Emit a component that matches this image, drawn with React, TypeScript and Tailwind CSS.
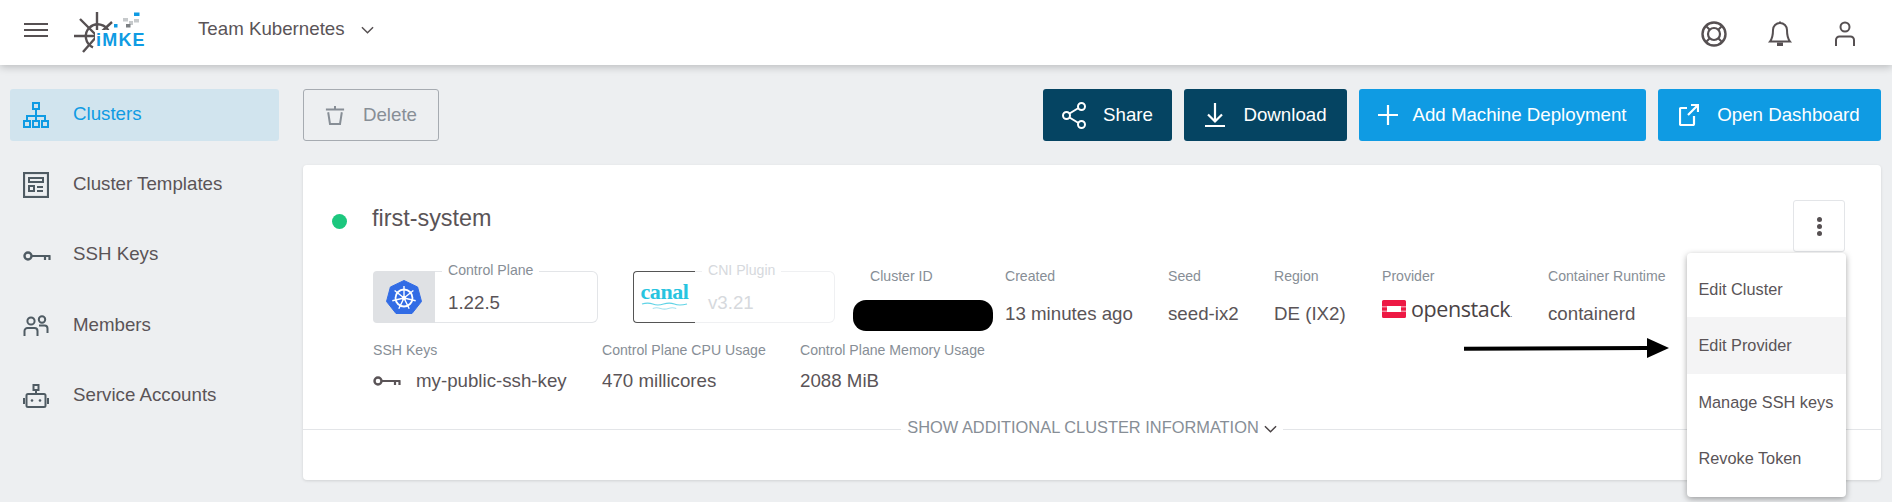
import React from "react";

const F = "font-['Liberation_Sans',Arial,sans-serif]";

function Sv({ className, children, vb = "0 0 24 24" }: { className: string; children: React.ReactNode; vb?: string }) {
  return (
    <svg viewBox={vb} className={className} fill="none" stroke="currentColor" strokeWidth="2">
      {children}
    </svg>
  );
}

const NetIcon = () => (
  <Sv vb="0 0 26 26" className="w-[26px] h-[26px]">
    <rect x="10" y="1" width="6" height="6" />
    <rect x="1" y="19" width="6" height="6" />
    <rect x="10" y="19" width="6" height="6" />
    <rect x="19" y="19" width="6" height="6" />
    <path d="M13 7v12M4 19v-5h18v5" />
  </Sv>
);
const TplIcon = () => (
  <Sv vb="0 0 26 26" className="w-[26px] h-[26px]">
    <rect x="1" y="1" width="24" height="24" strokeWidth="2.2" />
    <rect x="6" y="6" width="14" height="4" />
    <rect x="6" y="14" width="5" height="5" />
    <path d="M14 15h6M14 19h6" />
  </Sv>
);
const KeyIcon = ({ c = "w-[28px] h-[14px]" }: { c?: string }) => (
  <Sv vb="0 0 28 14" className={c}>
    <circle cx="5" cy="7" r="3.5" strokeWidth="2.4" />
    <path d="M8.5 7H27.5M22 7v4M26.5 7v4" strokeWidth="2.2" />
  </Sv>
);
const UsersIcon = () => (
  <Sv vb="0 0 26 26" className="w-[26px] h-[26px]">
    <circle cx="8" cy="8" r="3.6" />
    <circle cx="19" cy="6.5" r="3.2" />
    <path d="M1.5 23v-5a3 3 0 0 1 3-3h7a3 3 0 0 1 3 3v5M16 12.5h5.5a3 3 0 0 1 3 3V20" />
  </Sv>
);
const RobotIcon = () => (
  <Sv vb="0 0 26 26" className="w-[26px] h-[26px]">
    <rect x="10.5" y="1" width="5" height="5" />
    <path d="M13 6v4" />
    <rect x="3.5" y="10" width="19" height="13" rx="1.5" />
    <path d="M1 14v6M25 14v6" />
    <circle cx="9" cy="16.5" r="1.3" fill="currentColor" stroke="none" />
    <circle cx="17" cy="16.5" r="1.3" fill="currentColor" stroke="none" />
  </Sv>
);

function NavItem({ icon, label, active }: { icon: React.ReactNode; label: string; active?: boolean }) {
  return (
    <div
      className={`flex items-center h-[52px] rounded-[3px] pl-[13px] ${
        active ? "bg-[#d1e4ee] text-[#0f9be3]" : "text-[#5a5457]"
      }`}
    >
      <span className={`w-[50px] flex items-center ${active ? "text-[#0f9be3]" : "text-[#4f5b63]"}`}>{icon}</span>
      <span className="text-[18.72px] leading-none -mt-[2px]">{label}</span>
    </div>
  );
}

function ActionButton({ icon, label, dark, w, gap = "gap-[17px]" }: { icon: React.ReactNode; label: string; dark?: boolean; w: string; gap?: string }) {
  return (
    <div
      className={`flex items-center justify-center ${gap} h-[52px] rounded-[3px] text-white text-[18.72px] ${w} ${
        dark ? "bg-[#054462]" : "bg-[#0f9be3]"
      }`}
    >
      {icon}
      <span>{label}</span>
    </div>
  );
}

function Info({ label, children, w, labelClass = "", gap = "mt-[14px]" }: { label: string; children: React.ReactNode; w: string; labelClass?: string; gap?: string }) {
  return (
    <div className={`${w} shrink-0`}>
      <div className={`text-[14.1px] leading-[16px] text-[#878e96] ${labelClass}`}>{label}</div>
      <div className={`${gap} h-[32px] flex items-center text-[18.72px] text-[#5a5457]`}>{children}</div>
    </div>
  );
}

function VersionBox({ label, value, logo, w, faded, logoClass }: { label: string; value: string; logo: React.ReactNode; w: string; faded?: boolean; logoClass: string }) {
  return (
    <div className={`relative ${w} h-[52px] mt-[3px] shrink-0 flex`}>
      <div className={`w-[62px] h-full flex items-center justify-center rounded-l-[4px] ${logoClass}`}>{logo}</div>
      <div className={`flex-1 flex items-center pl-[13px] border border-l-0 rounded-r-[6px] border-[#e3e5e8] text-[18.72px] pt-[12px] ${faded ? "text-[#d6d9dd] border-[#eff0f2]" : "text-[#5a5457]"}`}>
        {value}
      </div>
      <span className={`absolute left-[69px] -top-[9px] px-[6px] bg-white text-[14.1px] leading-[16px] ${faded ? "text-[#d6d9dd]" : "text-[#878e96]"}`}>
        {label}
      </span>
    </div>
  );
}

const K8s = () => (
  <svg viewBox="0 0 36 35" className="w-[36px] h-[35px]">
    <path d="M18 0.5 L31.6 7 L35.5 21.5 L26 33.5 L10 33.5 L0.5 21.5 L4.4 7 Z" fill="#326ce5" stroke="#326ce5" strokeLinejoin="round" />
    <circle cx="18" cy="18" r="8.5" stroke="#fff" fill="none" strokeWidth="1.8" />
    <path d="M18 18L18 6M18 18L27.4 10.5M18 18L29.7 20.7M18 18L23.2 28.8M18 18L12.8 28.8M18 18L6.3 20.7M18 18L8.6 10.5" stroke="#fff" strokeWidth="1.4" />
    <circle cx="18" cy="18" r="2.2" fill="#fff" />
  </svg>
);

const Canal = () => (
  <div className="flex flex-col items-center -mt-[2px]">
    <span className="font-['Liberation_Serif',serif] text-[#27c4e0] text-[22px] leading-[20px] font-bold tracking-[-0.4px]">canal</span>
    <svg viewBox="0 0 48 9" className="w-[47px] h-[9px]" fill="none" stroke="#a6e3ef" strokeWidth="1.2">
      <path d="M1 2q6-2 11 0t11 0 11 0 13 0" stroke="#5fd3e6" />
      <path d="M12 6.5q4-1.5 8 0t8 0 8 0" />
    </svg>
  </div>
);

const OpenStack = () => (
  <div className="flex items-center gap-[5px] -mt-[10px]">
    <svg viewBox="0 0 24 18" className="w-[24px] h-[18px]">
      <path d="M0 1.5A1.5 1.5 0 0 1 1.5 0h21A1.5 1.5 0 0 1 24 1.5V6.5h-5V6H5v.5H0zM0 11.5h5v.5h14v-.5h5v5a1.5 1.5 0 0 1-1.5 1.5h-21A1.5 1.5 0 0 1 0 16.5zM0 7.3h5v3.4H0zM19 7.3h5v3.4h-5z" fill="#ed1944" />
    </svg>
    <span className="font-['Open_Sans',sans-serif] text-[21.5px] leading-none tracking-[-0.4px] text-[#4a4345] font-medium">
      openstack<span className="text-[8px] font-normal">.</span>
    </span>
  </div>
);

const Logo = () => (
  <div className="relative w-[72px] h-[42px] ml-[26px] -mt-[2px]">
    <svg viewBox="0 0 72 42" className="absolute inset-0 w-[72px] h-[42px]" fill="none">
      <g stroke="#565052" strokeWidth="2.4">
        <path d="M35 21A12 12 0 1 0 19 36.300" />
        <path d="M23 1v24M6 8l17 17M38 11L23 25M0 25h23M9 41l14-16" />
      </g>
      <rect x="40" y="13" width="3.5" height="3.5" fill="#0f9be3" />
      <rect x="49" y="7" width="5" height="3.5" fill="#c6c9cb" />
      <rect x="55" y="10" width="4" height="4" fill="#c6c9cb" />
      <rect x="52" y="13" width="4.500" height="3.500" fill="#7b7f82" />
      <rect x="60" y="8" width="5" height="3.5" fill="#c6c9cb" />
      <rect x="60" y="1.5" width="5.5" height="3.5" fill="#0f9be3" />
    </svg>
    <span className="absolute left-[21px] top-[19px] pl-[1px] bg-white text-[#0f9be3] text-[18px] leading-[20px] font-bold tracking-[1.2px]">iMKE</span>
  </div>
);

export default function App() {
  return (
    <div className={`${F} w-[1892px] h-[502px] overflow-hidden bg-[#edeff1] flex flex-col`}>
      <header className="h-[65px] shrink-0 bg-white shadow-[0_2px_8px_rgba(0,0,0,0.22)] z-10 flex items-center pl-[24px]">
        <svg viewBox="0 0 24 16" className="w-[24px] h-[16px] -mt-[6px] text-[#565052]" fill="none" stroke="currentColor" strokeWidth="2">
          <path d="M0 2h24M0 8h24M0 14h24" />
        </svg>
        <Logo />
        <span className="ml-[52px] text-[18.72px] text-[#5a5457] -mt-[7px]">Team Kubernetes</span>
        <svg viewBox="0 0 14 8" className="ml-[16px] w-[13px] h-[8px] -mt-[5px] text-[#565052]" fill="none" stroke="currentColor" strokeWidth="1.6">
          <path d="M1 1l6 6 6-6" />
        </svg>
        <div className="ml-auto flex items-center gap-[39.5px] pr-[34px] mt-[3px] text-[#565052]">
          <Sv vb="0 0 26 26" className="w-[26px] h-[26px]">
            <circle cx="13" cy="13" r="11.5" strokeWidth="2.4" />
            <circle cx="13" cy="13" r="6" strokeWidth="2.2" />
            <path d="M5 5l4 4M21 5l-4 4M5 21l4-4M21 21l-4-4" strokeWidth="2" />
          </Sv>
          <Sv vb="0 0 26 26" className="w-[26px] h-[26px]">
            <path d="M13 2a7 7 0 0 1 7 7c0 6 1 9 3 11.5H3C5 18 6 15 6 9a7 7 0 0 1 7-7z" />
            <path d="M13 0.500v2M11 22.500h4v1.500h-4z" fill="currentColor" />
          </Sv>
          <Sv vb="0 0 26 26" className="w-[26px] h-[26px]">
            <circle cx="13" cy="6" r="4.500" />
            <path d="M4 25v-6a3.500 3.500 0 0 1 3.500-3.500h11A3.500 3.500 0 0 1 22 19v6" />
          </Sv>
        </div>
      </header>

      <div className="flex flex-1">
        <aside className="w-[303px] shrink-0 pl-[10px] pr-[24px] pt-[24px] flex flex-col gap-[18.4px]">
          <NavItem active icon={<NetIcon />} label="Clusters" />
          <NavItem icon={<TplIcon />} label="Cluster Templates" />
          <NavItem icon={<KeyIcon />} label="SSH Keys" />
          <NavItem icon={<UsersIcon />} label="Members" />
          <NavItem icon={<RobotIcon />} label="Service Accounts" />
        </aside>

        <main className="w-[1578px] pt-[24px]">
          <div className="flex items-center h-[52px]">
            <div className="w-[136px] h-[52px] border border-[#a6abb1] rounded-[3px] flex items-center justify-center gap-[18px] text-[#878e96] text-[18.72px]">
              <Sv vb="0 0 22 24" className="w-[20px] h-[22px]">
                <path d="M1 6h20M11 2v4M3.500 9l2 13h11l2-13" strokeWidth="2.2" />
              </Sv>
              <span>Delete</span>
            </div>
            <div className="ml-auto flex gap-[12px]">
              <ActionButton
                dark
                w="w-[129px]"
                label="Share"
                icon={
                  <Sv vb="0 0 24 27" className="w-[24px] h-[27px]">
                    <circle cx="19.500" cy="4.500" r="3.500" />
                    <circle cx="4.500" cy="13.500" r="3.500" />
                    <circle cx="19.500" cy="22.500" r="3.500" />
                    <path d="M7.500 11.500l9-5.500M7.500 15.500l9 5.500" />
                  </Sv>
                }
              />
              <ActionButton
                dark
                w="w-[163px]"
                label="Download"
                icon={
                  <Sv vb="0 0 22 24" className="w-[22px] h-[24px]">
                    <path d="M11 0v18M4 11.500l7 7 7-7M1 23h20" strokeWidth="2.2" />
                  </Sv>
                }
              />
              <ActionButton
                w="w-[287px]"
                gap="gap-[14px]"
                label="Add Machine Deployment"
                icon={
                  <Sv vb="0 0 20 20" className="w-[20px] h-[20px]">
                    <path d="M10 0v20M0 10h20" strokeWidth="2.2" />
                  </Sv>
                }
              />
              <ActionButton
                w="w-[223px]"
                gap="gap-[18px]"
                label="Open Dashboard"
                icon={
                  <Sv vb="0 0 20 22" className="w-[20px] h-[22px]">
                    <path d="M8 4H2a1 1 0 0 0-1 1v15a1 1 0 0 0 1 1h12a1 1 0 0 0 1-1v-8M9 11L19 1M12 1h7v7" strokeWidth="2.2" />
                  </Sv>
                }
              />
            </div>
          </div>

          <section className="relative mt-[24px] h-[315px] pt-[35px] bg-white rounded-[4px] shadow-[0_1px_3px_rgba(0,0,0,0.12)]">
            <div className="flex items-start h-[52px] pl-[29px] pr-[36px]">
              <span className="w-[15px] h-[15px] mt-[14px] rounded-full bg-[#1cc77e]" />
              <span className="ml-[25px] mt-[4px] text-[23.4px] leading-[28px] text-[#5a5457]">first-system</span>
              <div className="ml-auto w-[52px] h-[52px] border border-[#e3e5e8] rounded-[3px] flex flex-col items-center justify-center gap-[2px]">
                <span className="w-[5px] h-[5px] rounded-full bg-[#565052]" />
                <span className="w-[5px] h-[5px] rounded-full bg-[#565052]" />
                <span className="w-[5px] h-[5px] rounded-full bg-[#565052]" />
              </div>
            </div>

            <div className="flex pl-[70px] mt-[16px]">
              <VersionBox label="Control Plane" value="1.22.5" w="w-[225px]" logo={<K8s />} logoClass="bg-[#dfe1e4]" />
              <div className="w-[35px]" />
              <VersionBox label="CNI Plugin" value="v3.21" w="w-[202px]" faded logo={<Canal />} logoClass="border border-r-0 border-[#555]" />
              <div className="w-[18px]" />
              <Info label="Cluster ID" w="w-[152px]" labelClass="pl-[17px]">
                <span className="w-[140px] h-[31px] mt-[3px] rounded-[13px] bg-black" />
              </Info>
              <Info label="Created" w="w-[163px]">13 minutes ago</Info>
              <Info label="Seed" w="w-[106px]">seed-ix2</Info>
              <Info label="Region" w="w-[108px]">DE (IX2)</Info>
              <Info label="Provider" w="w-[166px]"><OpenStack /></Info>
              <Info label="Container Runtime" w="w-[130px]">containerd</Info>
            </div>

            <div className="flex pl-[70px] mt-[12px]">
              <Info label="SSH Keys" w="w-[229px]" gap="mt-[7px]">
                <span className="flex items-center gap-[15px]">
                  <KeyIcon />
                  my-public-ssh-key
                </span>
              </Info>
              <Info label="Control Plane CPU Usage" w="w-[198px]" gap="mt-[7px]">470 millicores</Info>
              <Info label="Control Plane Memory Usage" w="w-[220px]" gap="mt-[7px]">2088 MiB</Info>
            </div>

            <div className="flex items-center mt-[23px] h-[18px]">
              <div className="flex-1 h-px bg-[#e3e5e8]" />
              <span className="px-[6px] flex items-center gap-[5px] text-[#878e96] text-[16.4px] -mt-[3px]">
                SHOW ADDITIONAL CLUSTER INFORMATION
                <svg viewBox="0 0 14 8" className="w-[13px] h-[8px] text-[#4a4345] mt-[3px]" fill="none" stroke="currentColor" strokeWidth="1.6">
                  <path d="M1 1l6 6 6-6" />
                </svg>
              </span>
              <div className="flex-1 h-px bg-[#e3e5e8]" />
            </div>

            <svg viewBox="0 0 205 20" className="absolute left-[1161px] top-[173px] w-[205px] h-[20px]">
              <path d="M0 10.800L184 10" stroke="#000" strokeWidth="4" />
              <path d="M183 0L205 10L183 20Z" fill="#000" />
            </svg>

            <div className="absolute left-[1384px] top-[88px] w-[159px] h-[244px] py-[8px] bg-white rounded-[4px] shadow-[0_2px_6px_rgba(0,0,0,0.35)] text-[#5a5457] text-[16.3px] z-20">
              {["Edit Cluster", "Edit Provider", "Manage SSH keys", "Revoke Token"].map((t, i) => (
                <div key={t} className={`h-[56.4px] flex items-center pl-[11.5px] ${i === 1 ? "bg-[#f4f4f5]" : ""}`}>
                  {t}
                </div>
              ))}
            </div>
          </section>
        </main>
      </div>
    </div>
  );
}
